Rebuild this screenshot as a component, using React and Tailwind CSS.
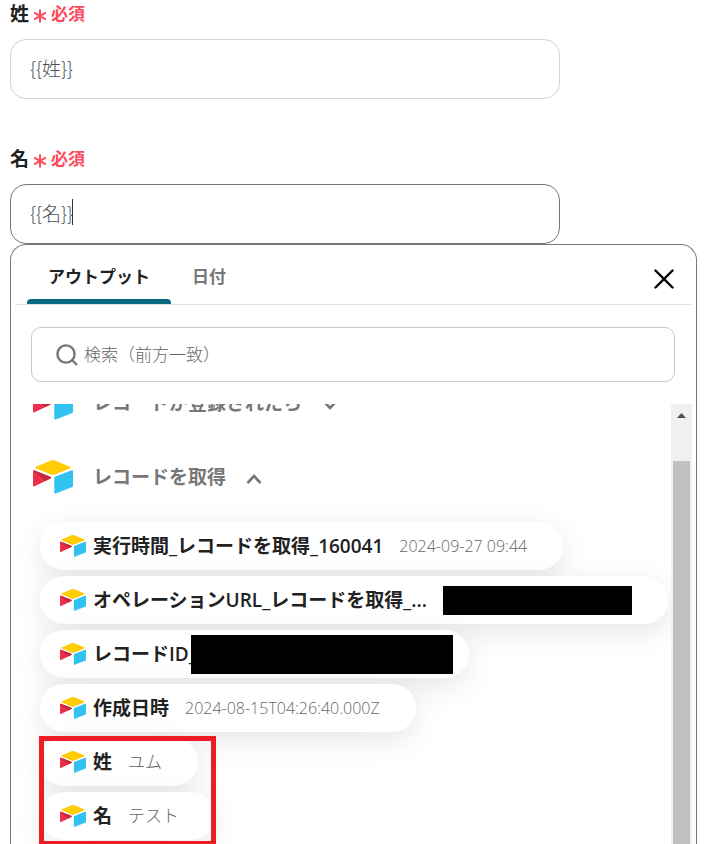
import React, { useLayoutEffect, useRef } from 'react';

const outputs = [
    { label: '実行時間_レコードを取得_160041', value: '2024-09-27 09:44', stamp: true },
    { label: 'オペレーションURL_レコードを取得_...', masked: 'value' },
    { label: 'レコードID_', masked: 'label' },
    { label: '作成日時', value: '2024-08-15T04:26:40.000Z', stamp: true },
];

const highlighted = [
    { label: '姓', value: 'ユム' },
    { label: '名', value: 'テスト' },
];

const AirtableLogo = ({ className }) => (
    <svg viewBox="11 10 177 149" className={className} aria-hidden="true">
        <path fill="#ffcc05" d="M90.04 12.37 24.08 39.66c-3.67 1.52-3.63 6.73.06 8.19l66.24 26.27c5.82 2.3 12.3 2.3 18.12 0l66.23-26.27c3.69-1.46 3.73-6.67.06-8.19l-65.96-27.29a24.6 24.6 0 0 0-18.79 0" />
        <path fill="#32c2f2" d="M105.31 88.46v65.62c0 3.12 3.15 5.25 6.05 4.1l73.81-28.64a4.42 4.42 0 0 0 2.79-4.11V59.81c0-3.12-3.15-5.25-6.05-4.1L108.1 84.35a4.42 4.42 0 0 0-2.79 4.11" />
        <path fill="#ed3049" d="M88.08 91.85 66.17 102.42l-2.22 1.08-46.24 22.15c-2.93 1.41-6.67-.72-6.67-3.98V60.09c0-1.18.6-2.2 1.42-2.96.33-.34.72-.62 1.11-.84 1.11-.66 2.68-.84 4.02-.31l70.12 27.78c3.56 1.41 3.84 6.41.37 8.09" />
        <path fill="#c62842" d="M88.08 91.85 66.17 102.42 12.46 57.13c.33-.34.72-.62 1.11-.84 1.11-.66 2.68-.84 4.02-.31l70.12 27.78c3.56 1.41 3.84 6.41.37 8.09" />
    </svg>
);

const FieldLabel = ({ htmlFor, children }) => (
    <label htmlFor={htmlFor} className="flex h-7 items-center text-[19px] font-bold text-[#222]">
        {children}
        <span className="flex items-center pl-1 text-[17px] text-[#ff4a5c]">
            <svg viewBox="0 0 14 14" className="mt-1 mr-1 size-[14px]" fill="none" stroke="currentColor" strokeWidth="2">
                <path d="M7 .5v13M1.2 3.7l11.6 6.6M12.8 3.7 1.2 10.3" />
            </svg>
            必須
        </span>
    </label>
);

const inputClass =
    "h-[60px] w-full rounded-2xl border bg-white px-[19px] pb-1 font-['Noto_Sans_CJK_JP',sans-serif] text-[19px] font-light text-[#495057] outline-none";

const Group = ({ title, open }) => (
    <button type="button" aria-expanded={open} className="flex h-[74px] items-center text-[19px] font-bold text-[#777]">
        <AirtableLogo className="mr-5 w-10" />
        {title}
        <svg viewBox="0 0 16 10" className="mt-1 ml-5 w-4" fill="none" stroke="currentColor" strokeWidth="2.6">
            <path d={open ? 'M1.5 9 8 2l6.5 7' : 'M1.5 1 8 8l6.5-7'} />
        </svg>
    </button>
);

const Chip = ({ label, value, masked, stamp }) => (
    <button
        type="button"
        className={`flex h-12 w-fit items-center rounded-full bg-white pl-5 whitespace-nowrap shadow-[0_8px_30px_rgba(0,0,0,0.1)] ${masked === 'label' ? 'pr-4' : 'pr-9'}`}
    >
        <AirtableLogo className="mr-[7px] w-[26px]" />
        <span className="text-[19px] font-semibold text-[#222]">{label}</span>
        {masked === 'label' && <span className="-ml-1.5 h-[39px] w-[262px] bg-black" />}
        {masked === 'value' && <span className="ml-4 h-[29px] w-[189px] bg-black" />}
        {value && <span className={`ml-4 font-light text-[#666] ${stamp ? 'text-base' : 'text-[17px]'}`}>{value}</span>}
    </button>
);

const OutputPicker = () => {
    const listRef = useRef(null);

    useLayoutEffect(() => {
        listRef.current.scrollTop = 38;
    }, []);

    return (
        <section className="mr-[10px] flex min-h-0 flex-1 flex-col rounded-t-2xl border border-b-0 border-[#777] bg-white px-1">
            <div className="flex h-[60px] shrink-0 items-stretch border-b border-[#e3e3e3] pl-3 text-[17px] font-bold" role="tablist">
                <button type="button" role="tab" aria-selected="true" className="relative px-[21px] pt-1 text-[#222]">
                    アウトプット
                    <span className="absolute inset-x-0 bottom-0 h-[5px] rounded-t bg-[#0b6a82]" />
                </button>
                <button type="button" role="tab" aria-selected="false" className="px-[21px] pt-1 text-[#777]">
                    日付
                </button>
                <button type="button" aria-label="閉じる" className="mt-2 mr-[18px] ml-auto">
                    <svg viewBox="0 0 20 20" className="size-5" fill="none" stroke="#000" strokeWidth="2.4" strokeLinecap="round">
                        <path d="M1.5 1.5l17 17M18.5 1.5l-17 17" />
                    </svg>
                </button>
            </div>

            <div className="mr-[17px] ml-4 mt-[22px] flex h-[55px] shrink-0 items-center rounded-[10px] border border-[#c8c8c8] pl-6">
                <svg viewBox="0 0 22 22" className="mr-[6px] size-[22px]" fill="none" stroke="#777" strokeWidth="2.4">
                    <circle cx="10" cy="10" r="8.6" />
                    <path d="M16 16l5 5" />
                </svg>
                <input
                    type="text"
                    aria-label="検索"
                    placeholder="検索（前方一致）"
                    className="min-w-0 flex-1 text-[17px] font-light outline-none placeholder:text-[#666]"
                />
            </div>

            <div className="mt-[22px] flex min-h-0 flex-1">
                <div ref={listRef} className="min-w-0 flex-1 overflow-hidden pl-[18px]">
                    <Group title="レコードが登録されたら" open={false} />
                    <Group title="レコードを取得" open />
                    <div className="flex flex-col gap-[6px] pt-2 pb-40 pl-[7px]">
                        {outputs.map((item) => (
                            <Chip key={item.label} {...item} />
                        ))}
                        <div className="relative flex flex-col gap-[6px]">
                            {highlighted.map((item) => (
                                <Chip key={item.label} {...item} />
                            ))}
                            <span className="pointer-events-none absolute -top-0.5 -bottom-1.5 -left-px w-[177px] border-[5px] border-[#ee1c25]" />
                        </div>
                    </div>
                </div>
                <div className="flex w-[21px] flex-col items-center bg-[#f0f0f0]">
                    <svg viewBox="0 0 9 5" className="mt-[9px] w-[9px]" fill="#505050">
                        <path d="M4.5 0 9 5H0z" />
                    </svg>
                    <span className="mt-[43px] w-[17px] flex-1 bg-[#c1c1c1]" />
                </div>
            </div>
        </section>
    );
};

const App = () => (
    <main className="flex h-screen flex-col overflow-hidden bg-white pl-[10px] font-['Open_Sans','Noto_Sans_CJK_JP',sans-serif]">
        <div className="mb-[46px] flex max-w-[550px] flex-col gap-[11px]">
            <FieldLabel htmlFor="last-name">姓</FieldLabel>
            <input id="last-name" type="text" defaultValue="{{姓}}" className={`${inputClass} border-[#ced4da]`} />
        </div>
        <div className="flex max-w-[550px] flex-col gap-[11px]">
            <FieldLabel htmlFor="first-name">名</FieldLabel>
            <div className="relative">
                <input id="first-name" type="text" defaultValue="{{名}}" className={`${inputClass} border-[#777]`} />
                <span className="absolute top-[15px] left-[62px] h-[26px] w-px bg-[#333]" />
            </div>
        </div>
        <OutputPicker />
    </main>
);

export default App;
